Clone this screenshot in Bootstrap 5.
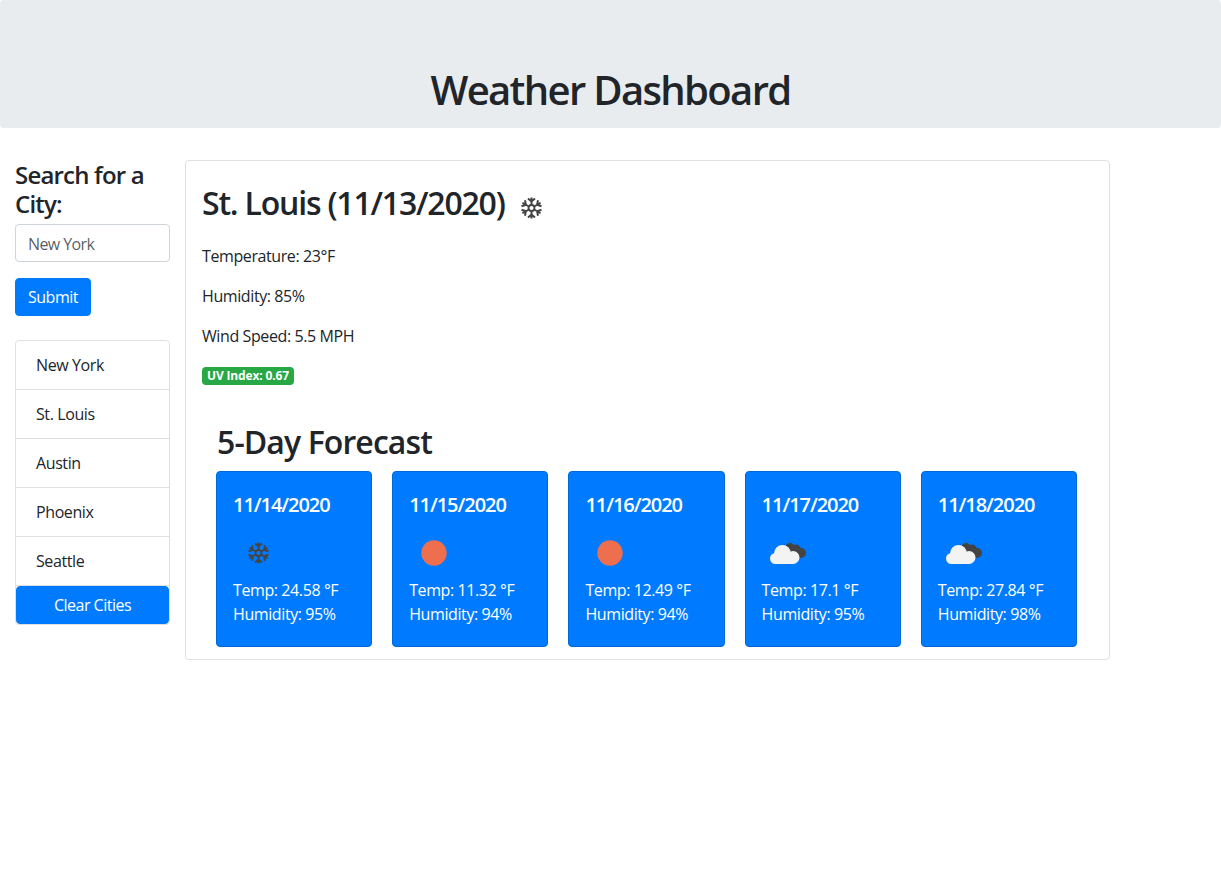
<!DOCTYPE html>
<html>
<head>
    <title>Weather Dashboard</title>
    <link href="https://cdn.jsdelivr.net/npm/bootstrap@5.3.0/dist/css/bootstrap.min.css" rel="stylesheet">
    <script src="https://cdn.jsdelivr.net/npm/bootstrap@5.3.0/dist/js/bootstrap.bundle.min.js"></script>
    <style>
        body {
            font-family: "Open Sans", sans-serif;
            color: #212529;
            letter-spacing: -0.4px;
        }
        .hero {
            background: #e9ecef;
            height: 128px;
            padding-top: 66px;
            border-radius: 4px;
            margin-bottom: 32px;
        }
        .hero h1 { font-size: 40px; font-weight: 600; line-height: 48px; margin: 0; letter-spacing: -1.65px; }
        .side-col { width: 185px; padding-left: 15px; padding-right: 15px; flex: none; }
        .main-col { width: 925px; flex: none; }
        .side-title { font-size: 24px; font-weight: 600; line-height: 28.8px; margin: 1px 0 5px; letter-spacing: -0.8px; }
        .city-input { height: 38px; font-size: 16px; padding: 7px 12px 5px; border-color: #ced4da; border-radius: 4px; margin-bottom: 16px; letter-spacing: -0.6px; }
        .btn-blue { background: #007bff; border-color: #007bff; color: #fff; border-radius: 4px; height: 38px; letter-spacing: -0.5px; }
        .cities { margin-top: 24px; border: 1px solid #dfdfdf; border-radius: 4px; }
        .cities .list-group-item { height: 49px; padding: 12px 20px; border-width: 0 0 1px; border-color: #dfdfdf; line-height: 24px; }
        .cities .btn-blue { width: 100%; }
        .main-card { border-color: #dfdfdf; border-radius: 4px; padding: 16px 16px 12px; }
        .city-head { font-size: 32px; font-weight: 600; height: 59px; margin-bottom: 8px; line-height: 52px; letter-spacing: -1.2px; }
        .city-head svg { vertical-align: -18px; margin-left: -6px; }
        .main-card p { margin-bottom: 16px; line-height: 24px; }
        .uv-badge { background: #28a745; font-size: 12px; font-weight: 700; padding: 3px 5px; border-radius: 4px; letter-spacing: -0.15px; vertical-align: 2px; }
        .forecast-title { font-size: 32px; font-weight: 600; line-height: 38.4px; margin: 19px 0 9.6px 15px; letter-spacing: -0.9px; }
        .forecast-row { display: flex; gap: 20px; padding-left: 14px; padding-right: 16px; }
        .day-card { flex: 1 1 0; height: 176px; background: #007bff; border: 1px solid #0069d9; border-radius: 4px; color: #fff; padding: 16px; }
        .day-card h5 { font-size: 20px; font-weight: 600; line-height: 24px; margin: 5px 0 11px; letter-spacing: -1.05px; }
        .day-card svg { display: block; }
        .day-card div { line-height: 24px; }
    </style>
</head>
<body>
    <svg width="0" height="0" class="position-absolute">
        <defs>
            <g id="flake" stroke="#444" fill="none" stroke-width="2" transform="translate(0.5 0)">
                <path id="arm" d="M25 22.500V14.500M21.500 15.500l3.500 3 3.500-3"/>
                <use href="#arm" transform="rotate(60 25 25)"/>
                <use href="#arm" transform="rotate(120 25 25)"/>
                <use href="#arm" transform="rotate(180 25 25)"/>
                <use href="#arm" transform="rotate(240 25 25)"/>
                <use href="#arm" transform="rotate(300 25 25)"/>
                <circle cx="25" cy="25" r="3" stroke-width="1.800"/>
            </g>
            <g id="clouds">
                <g fill="#444">
                    <circle cx="28" cy="20" r="5"/>
                    <circle cx="34" cy="21" r="4.500"/>
                    <circle cx="39" cy="25" r="5"/>
                    <rect x="26" y="22" width="13" height="8"/>
                </g>
                <g fill="#f3f3f3">
                    <circle cx="13.500" cy="30.500" r="5.500"/>
                    <circle cx="20.500" cy="25.500" r="8.500"/>
                    <circle cx="31" cy="29.500" r="6.500"/>
                    <rect x="13.500" y="28" width="18" height="8"/>
                </g>
            </g>
        </defs>
    </svg>

    <div class="hero text-center">
        <h1>Weather Dashboard</h1>
    </div>

    <div class="d-flex">
        <div class="side-col">
            <h4 class="side-title">Search for a City:</h4>
            <input type="text" class="form-control city-input" placeholder="New York">
            <button type="button" class="btn btn-blue">Submit</button>
            <div class="list-group cities">
                <a href="#" class="list-group-item list-group-item-action">New York</a>
                <a href="#" class="list-group-item list-group-item-action">St. Louis</a>
                <a href="#" class="list-group-item list-group-item-action">Austin</a>
                <a href="#" class="list-group-item list-group-item-action">Phoenix</a>
                <a href="#" class="list-group-item list-group-item-action">Seattle</a>
                <button type="button" class="btn btn-blue">Clear Cities</button>
            </div>
        </div>
        <div class="main-col">
            <div class="card main-card">
                <h2 class="city-head">St. Louis (11/13/2020)
                    <svg width="50" height="50" viewBox="0 0 50 50"><use href="#flake"/></svg>
                </h2>
                <p>Temperature: 23°F</p>
                <p>Humidity: 85%</p>
                <p>Wind Speed: 5.5 MPH</p>
                <p><span class="badge uv-badge">UV Index: 0.67</span></p>
                <h2 class="forecast-title">5-Day Forecast</h2>
                <div class="forecast-row">
                    <div class="day-card">
                        <h5>11/14/2020</h5>
                        <svg width="50" height="50" viewBox="0 0 50 50"><use href="#flake"/></svg>
                        <div>Temp: 24.58 °F</div>
                        <div>Humidity: 95%</div>
                    </div>
                    <div class="day-card">
                        <h5>11/15/2020</h5>
                        <svg width="50" height="50" viewBox="0 0 50 50"><circle cx="25" cy="25" r="12.700" fill="#ee6f4e"/></svg>
                        <div>Temp: 11.32 °F</div>
                        <div>Humidity: 94%</div>
                    </div>
                    <div class="day-card">
                        <h5>11/16/2020</h5>
                        <svg width="50" height="50" viewBox="0 0 50 50"><circle cx="25" cy="25" r="12.700" fill="#ee6f4e"/></svg>
                        <div>Temp: 12.49 °F</div>
                        <div>Humidity: 94%</div>
                    </div>
                    <div class="day-card">
                        <h5>11/17/2020</h5>
                        <svg width="50" height="50" viewBox="0 0 50 50"><use href="#clouds"/></svg>
                        <div>Temp: 17.1 °F</div>
                        <div>Humidity: 95%</div>
                    </div>
                    <div class="day-card">
                        <h5>11/18/2020</h5>
                        <svg width="50" height="50" viewBox="0 0 50 50"><use href="#clouds"/></svg>
                        <div>Temp: 27.84 °F</div>
                        <div>Humidity: 98%</div>
                    </div>
                </div>
            </div>
        </div>
    </div>
</body>
</html>
